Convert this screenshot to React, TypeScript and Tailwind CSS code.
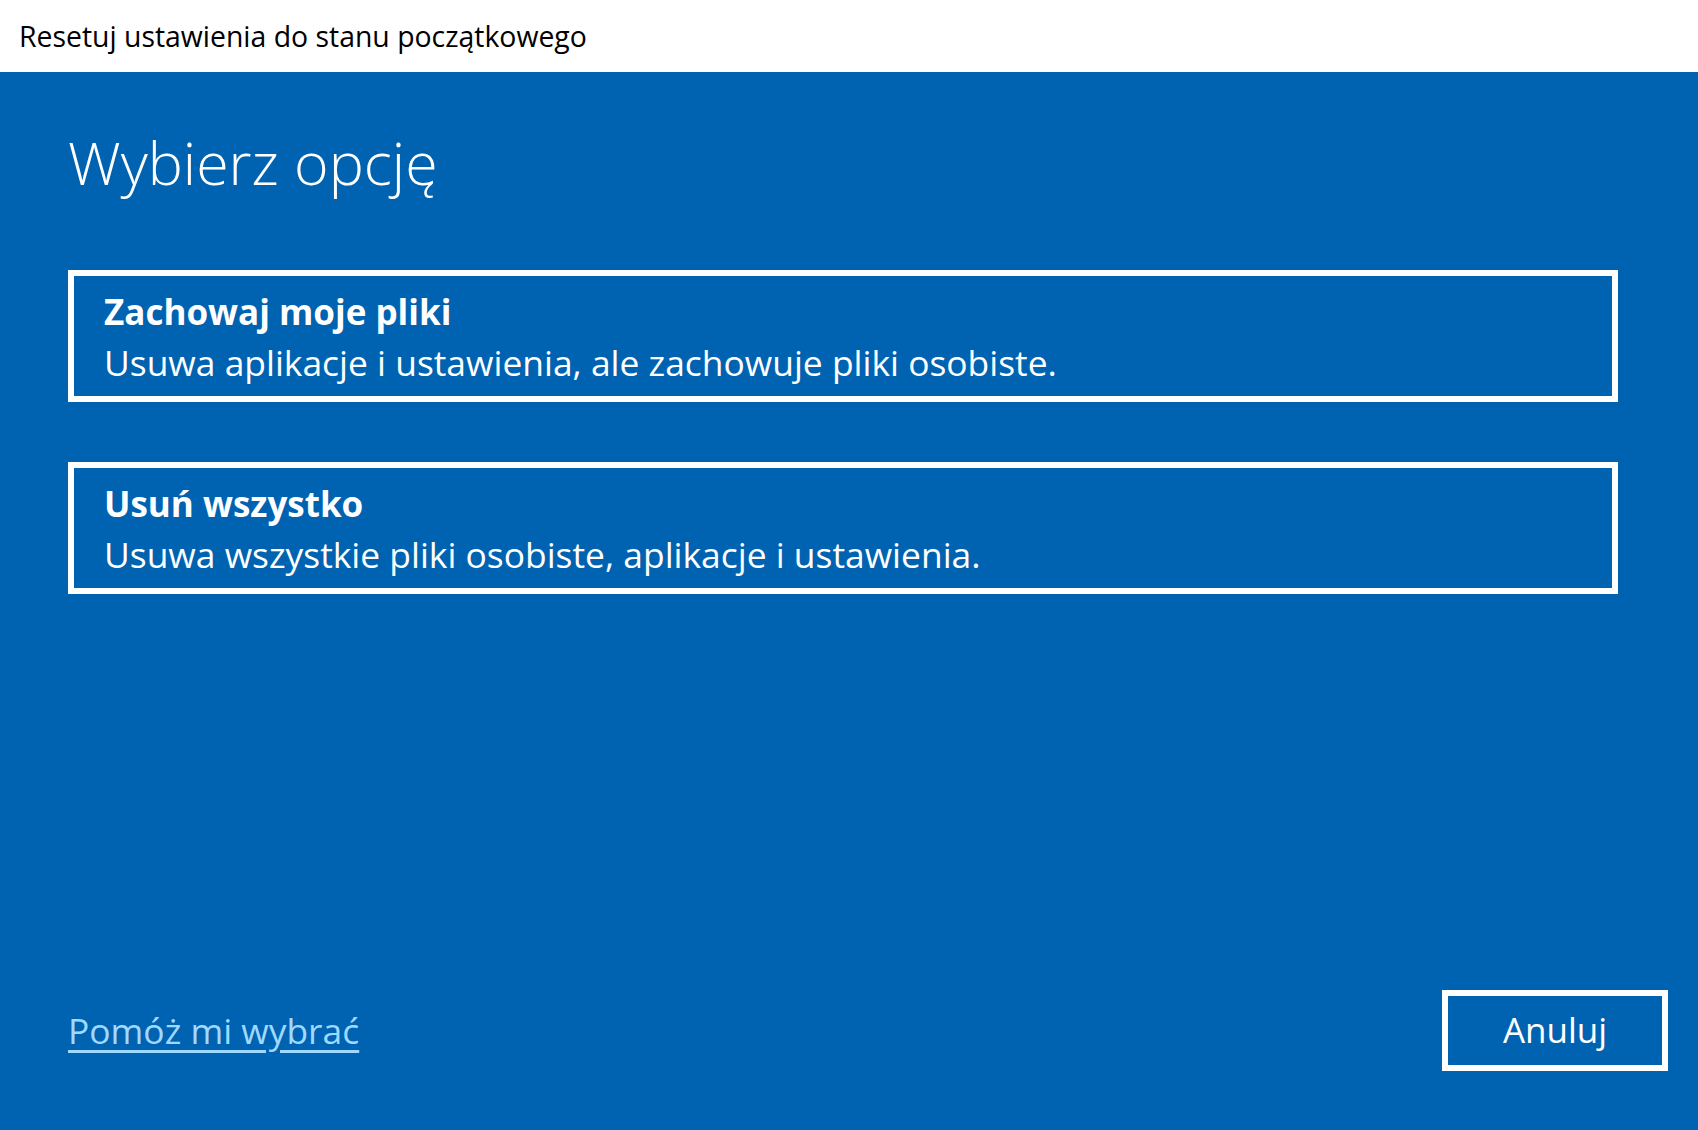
export default function App() {
  const font = { fontFamily: '"Segoe UI", "Open Sans", "Noto Sans", sans-serif' };

  return (
    <div className="flex h-[1130px] w-full flex-col" style={font}>
      {/* Title bar */}
      <header className="flex h-[72px] items-center bg-white pl-[19px]">
        <span className="text-[28.4px] text-black">Resetuj ustawienia do stanu początkowego</span>
      </header>

      {/* Content */}
      <main className="flex flex-1 flex-col bg-[#0063b1] pl-[68px] pr-[30px] text-white">
        <h1 className="mt-[50px] text-[59px] font-light leading-[80px]">Wybierz opcję</h1>

        <div className="mr-[50px] mt-[68px] flex flex-col gap-[60px]">
          <button className="flex h-[132px] flex-col justify-center border-[6px] border-white pl-[30px] pt-[2px] text-left">
            <span className="text-[35px] font-bold leading-[50px]">Zachowaj moje pliki</span>
            <span className="text-[35.4px] leading-[50px]">
              Usuwa aplikacje i ustawienia, ale zachowuje pliki osobiste.
            </span>
          </button>
          <button className="flex h-[132px] flex-col justify-center border-[6px] border-white pl-[30px] pt-[2px] text-left">
            <span className="text-[35px] font-bold leading-[50px]">Usuń wszystko</span>
            <span className="text-[35.4px] leading-[50px]">
              Usuwa wszystkie pliki osobiste, aplikacje i ustawienia.
            </span>
          </button>
        </div>

        {/* Footer */}
        <div className="mt-auto flex items-center justify-between pb-[59px]">
          <a className="text-[35.4px] text-[#9fd9ff] underline underline-offset-[6px]">Pomóż mi wybrać</a>
          <button className="flex h-[81px] w-[226px] items-center justify-center border-[6px] border-white text-[35px]">
            Anuluj
          </button>
        </div>
      </main>
    </div>
  );
}
